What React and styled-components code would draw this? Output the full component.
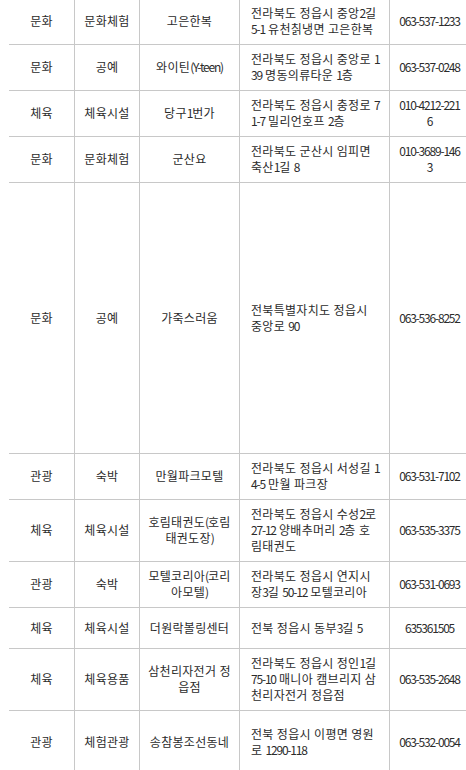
import React from 'react';
import styled, { createGlobalStyle } from 'styled-components';

const GlobalStyle = createGlobalStyle`
  html, body {
    margin: 0;
    padding: 0;
    background: #fff;
    overflow: hidden;
  }
`;

const Wrapper = styled.div`
  margin: -1px 0 0 9px;
  width: 460px;
  font-family: "Noto Sans CJK KR", "Noto Sans", sans-serif;
  font-size: 12px;
  line-height: 16px;
  letter-spacing: 0.3px;
  word-spacing: 0.2px;
  color: #2b2b2b;
`;

const Row = styled.div`
  display: grid;
  grid-template-columns: 65px 65px 100px 150px 80px;
  border-bottom: 1px solid #c8c8c8;
  min-height: 40px;
  height: ${(p) => (p.$height ? `${p.$height}px` : 'auto')};
`;

const Cell = styled.div`
  display: flex;
  align-items: center;
  justify-content: ${(p) => (p.$left ? 'flex-start' : 'center')};
  text-align: ${(p) => (p.$left ? 'left' : 'center')};
  padding: 6px ${(p) => p.$pad}px 7px ${(p) => (p.$left ? 11 : p.$pad)}px;
  border-left: ${(p) => (p.$first ? 'none' : '1px solid #c8c8c8')};
  word-break: break-all;
  min-width: 0;
`;

// latin letters and digits are set tighter, as in the source page
const Num = styled.span`
  letter-spacing: -1.2px;
`;

const Text = ({ children }) => (
  <span>
    {children.split(/([A-Za-z0-9()\-]+)/).map((part, i) =>
      i % 2 ? <Num key={i}>{part}</Num> : part
    )}
  </span>
);

const rows = [
  ['문화', '문화체험', '고은한복', '전라북도 정읍시 중앙2길 5-1 유천칡냉면 고은한복', '063-537-1233'],
  ['문화', '공예', '와이틴(Y-teen)', '전라북도 정읍시 중앙로 139 명동의류타운 1층', '063-537-0248'],
  ['체육', '체육시설', '당구1번가', '전라북도 정읍시 충정로 71-7 밀리언호프 2층', '010-4212-2216'],
  ['문화', '문화체험', '군산요', '전라북도 군산시 임피면 축산1길 8', '010-3689-1463'],
  ['문화', '공예', '가죽스러움', '전북특별자치도 정읍시 중앙로 90', '063-536-8252', 270],
  ['관광', '숙박', '만월파크모텔', '전라북도 정읍시 서성길 14-5 만월 파크장', '063-531-7102'],
  ['체육', '체육시설', '호림태권도(호림태권도장)', '전라북도 정읍시 수성2로 27-12 양배추머리 2층 호림태권도', '063-535-3375'],
  ['관광', '숙박', '모텔코리아(코리아모텔)', '전라북도 정읍시 연지시장3길 50-12 모텔코리아', '063-531-0693'],
  ['체육', '체육시설', '더원락볼링센터', '전북 정읍시 동부3길 5', '635361505'],
  ['체육', '체육용품', '삼천리자전거 정읍점', '전라북도 정읍시 정인1길 75-10 매니아 캠브리지 삼천리자전거 정읍점', '063-535-2648'],
  ['관광', '체험관광', '송참봉조선동네', '전북 정읍시 이평면 영원로 1290-118', '063-532-0054', 63],
];

export default function App() {
  return (
    <>
      <GlobalStyle />
      <Wrapper>
        {rows.map(([type, kind, name, addr, phone, height], i) => (
          <Row key={i} $height={height}>
            <Cell $first $pad={4}><Text>{type}</Text></Cell>
            <Cell $pad={4}><Text>{kind}</Text></Cell>
            <Cell $pad={7}><Text>{name}</Text></Cell>
            <Cell $left $pad={8}><Text>{addr}</Text></Cell>
            <Cell $pad={7}><Text>{phone}</Text></Cell>
          </Row>
        ))}
      </Wrapper>
    </>
  );
}
